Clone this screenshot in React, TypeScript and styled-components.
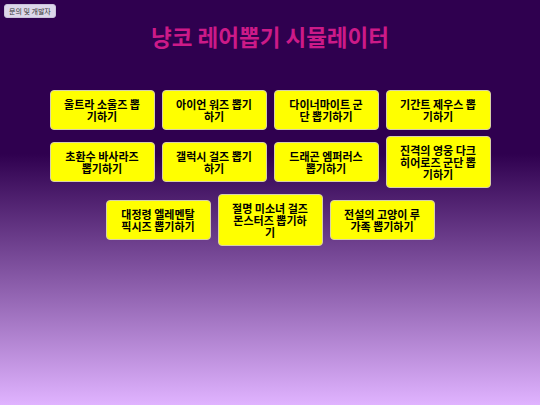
import React from "react";
import styled, { createGlobalStyle } from "styled-components";

const Global = createGlobalStyle`
  html, body { margin: 0; padding: 0; }
  body {
    min-height: 100vh;
    background: linear-gradient(to bottom, #2f004f 0%, #2f004f 38%, #e0b3ff 100%);
    font-family: "Noto Sans CJK KR", "Noto Sans", sans-serif;
  }
`;

const Page = styled.div`
  min-height: 405px;
  display: flex;
  flex-direction: column;
  align-items: center;
`;

const TopBar = styled.div`
  align-self: stretch;
  display: flex;
  padding: 4px 0 0 4px;
`;

const SmallButton = styled.button`
  font-family: "Noto Sans CJK KR", sans-serif;
  font-size: 7px;
  line-height: 9px;
  color: #333;
  background: #dcd7ea;
  border: 1px solid #c9c2da;
  border-radius: 3px;
  padding: 2px 4px;
  height: 14px;
`;

const Title = styled.h1`
  margin: 4px 0 0;
  font-size: 22.5px;
  line-height: 28px;
  font-weight: bold;
  color: #cc1a88;
`;

const Grid = styled.div`
  width: 441px;
  margin-top: 40px;
  display: flex;
  flex-wrap: wrap;
  justify-content: center;
  align-items: center;
  column-gap: 7px;
  row-gap: 6px;
`;

const GachaButton = styled.button`
  width: 105px;
  box-sizing: border-box;
  padding: 7px 12px;
  background: #ffff00;
  border: 1px solid #d8d0a8;
  border-radius: 4px;
  color: #000;
  font-family: "Noto Sans CJK KR", sans-serif;
  font-weight: bold;
  font-size: 11px;
  line-height: 12px;
  text-align: center;
  word-break: break-all;
`;

const items = [
  "울트라 소울즈 뽑기하기",
  "아이언 워즈 뽑기하기",
  "다이너마이트 군단 뽑기하기",
  "기간트 제우스 뽑기하기",
  "초환수 바사라즈 뽑기하기",
  "갤럭시 걸즈 뽑기하기",
  "드래곤 엠퍼러스 뽑기하기",
  "진격의 영웅 다크 히어로즈 군단 뽑기하기",
  "대정령 엘레멘탈 픽시즈 뽑기하기",
  "절명 미소녀 걸즈 몬스터즈 뽑기하기",
  "전설의 고양이 루가족 뽑기하기",
];

export default function App() {
  return (
    <>
      <Global />
      <Page>
        <TopBar>
          <SmallButton>문의 및 개발자</SmallButton>
        </TopBar>
        <Title>냥코 레어뽑기 시뮬레이터</Title>
        <Grid>
          {items.map((t) => (
            <GachaButton key={t}>{t}</GachaButton>
          ))}
        </Grid>
      </Page>
    </>
  );
}
